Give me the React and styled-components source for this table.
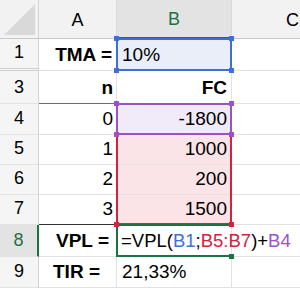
import React from "react";
import styled, { createGlobalStyle } from "styled-components";

const GREEN = "#1e7145";
const BLUE = "#3f6fd6";
const PURPLE = "#9b52c9";
const RED = "#d8203f";

const GlobalStyle = createGlobalStyle`
  html, body {
    margin: 0;
    padding: 0;
    background: #fff;
  }
  body {
    font-family: "Liberation Sans", Arial, sans-serif;
  }
`;

const Sheet = styled.div`
  width: 300px;
  height: 288px;
  overflow: hidden;
  display: grid;
  grid-template-columns: 39px 78px 115px 122px;
  grid-template-rows: 39px 32px 33px 31px 30px 30px 30px 32px 31px;
  color: #000;
`;

const Corner = styled.div`
  background: #f2f2f2;
  border-right: 1px solid #d4d4d4;
  border-bottom: 1px solid #c9c9c9;
  box-sizing: border-box;
  svg {
    display: block;
  }
`;

const ColHeader = styled.div`
  display: flex;
  align-items: center;
  justify-content: center;
  box-sizing: border-box;
  padding-top: 2px;
  font-size: 18px;
  background: ${(p) => (p.$active ? "#e3e3e3" : "#f2f2f2")};
  color: ${(p) => (p.$active ? GREEN : "#000")};
  border-right: 1px solid #dadada;
  border-bottom: ${(p) => (p.$active ? `2px solid ${GREEN}` : "1px solid #c9c9c9")};
`;

const RowHeader = styled.div`
  display: flex;
  align-items: flex-end;
  justify-content: center;
  box-sizing: border-box;
  padding-bottom: 5px;
  font-size: 18px;
  background: ${(p) => (p.$active ? "#e3e3e3" : "#f5f5f5")};
  color: ${(p) => (p.$active ? GREEN : "#000")};
  border-right: ${(p) => (p.$active ? `2px solid ${GREEN}` : "1px solid #d4d4d4")};
  border-bottom: ${(p) => (p.$gap ? "3px double #d0d0d0" : "1px solid #e3e3e3")};
`;

const Cell = styled.div`
  position: relative;
  display: flex;
  align-items: flex-end;
  justify-content: ${(p) => (p.$left ? "flex-start" : "flex-end")};
  box-sizing: border-box;
  min-width: 0;
  padding: 0 ${(p) => p.$pr ?? 4}px 4px ${(p) => (p.$left ? 5 : 4)}px;
  font-size: 19px;
  font-weight: ${(p) => (p.$bold ? 700 : 400)};
  white-space: nowrap;
  background: ${(p) => p.$fill || "transparent"};
  border-right: 1px solid #e2e2e2;
  border-bottom: 1px solid ${(p) => p.$rule || "#e2e2e2"};
`;

const Value = styled.span`
  position: relative;
  z-index: 1;
`;

const Formula = styled(Value)`
  font-size: 18.5px;
  margin-left: -1px;
`;

const Ref = styled.span`
  color: ${(p) => p.$c};
`;

const Frame = styled.div`
  position: absolute;
  top: -1px;
  left: -1px;
  right: -1px;
  bottom: -1px;
  z-index: 2;
  pointer-events: none;
  border: 0 solid ${(p) => p.$c};
  border-top-width: ${(p) => (p.$sides.includes("t") ? p.$w : 0)}px;
  border-right-width: ${(p) => (p.$sides.includes("r") ? p.$w : 0)}px;
  border-bottom-width: ${(p) => (p.$sides.includes("b") ? p.$w : 0)}px;
  border-left-width: ${(p) => (p.$sides.includes("l") ? p.$w : 0)}px;
`;

const Handle = styled.div`
  position: absolute;
  width: 5px;
  height: 5px;
  z-index: 3;
  background: ${(p) => p.$c};
  ${(p) => (p.$at[0] === "t" ? "top: -3px;" : "bottom: -3px;")}
  ${(p) => (p.$at[1] === "l" ? "left: -3px;" : "right: -3px;")}
`;

function Range({ c, sides = "trbl", w = 2, handles = [] }) {
  return (
    <>
      <Frame $c={c} $sides={sides} $w={w} />
      {handles.map((h) => (
        <Handle key={h} $c={c} $at={h} />
      ))}
    </>
  );
}

const ALL = ["tl", "tr", "bl", "br"];
const RULE = "#6e6e6e";

export default function App() {
  return (
    <>
      <GlobalStyle />
      <Sheet>
        <Corner>
          <svg width="38" height="38" viewBox="0 0 38 38">
            <polygon points="4,35 35,4 35,35" fill="#d9d9d9" />
          </svg>
        </Corner>
        <ColHeader>A</ColHeader>
        <ColHeader $active>B</ColHeader>
        <ColHeader>C</ColHeader>

        <RowHeader $gap>1</RowHeader>
        <Cell $bold><Value>TMA =</Value></Cell>
        <Cell $left $fill="#e9eef9">
          <Value>10%</Value>
          <Range c={BLUE} handles={ALL} />
        </Cell>
        <Cell />

        <RowHeader>3</RowHeader>
        <Cell $bold $pr={3} $rule={RULE}><Value>n</Value></Cell>
        <Cell $bold $rule={RULE}><Value>FC</Value></Cell>
        <Cell />

        <RowHeader>4</RowHeader>
        <Cell $pr={3}><Value>0</Value></Cell>
        <Cell $fill="#f1eaf8">
          <Value>-1800</Value>
          <Range c={PURPLE} handles={ALL} />
        </Cell>
        <Cell />

        <RowHeader>5</RowHeader>
        <Cell $pr={3}><Value>1</Value></Cell>
        <Cell $fill="#fbe4e7">
          <Value>1000</Value>
          <Range c={RED} sides="lr" />
        </Cell>
        <Cell />

        <RowHeader>6</RowHeader>
        <Cell $pr={3}><Value>2</Value></Cell>
        <Cell $fill="#fbe4e7">
          <Value>200</Value>
          <Range c={RED} sides="lr" />
        </Cell>
        <Cell />

        <RowHeader>7</RowHeader>
        <Cell $pr={3} $rule="#333"><Value>3</Value></Cell>
        <Cell $fill="#fbe4e7">
          <Value>1500</Value>
          <Range c={RED} sides="lrb" handles={["bl", "br"]} />
        </Cell>
        <Cell />

        <RowHeader $active>8</RowHeader>
        <Cell $bold $pr={7}><Value>VPL =</Value></Cell>
        <Cell $left>
          <Formula>
            =VPL(<Ref $c={BLUE}>B1</Ref>;<Ref $c={RED}>B5:B7</Ref>)+<Ref $c={PURPLE}>B4</Ref>
          </Formula>
          <Range c={GREEN} sides="tlb" handles={["br"]} />
        </Cell>
        <Cell />

        <RowHeader>9</RowHeader>
        <Cell $bold $pr={16}><Value>TIR =</Value></Cell>
        <Cell $left><Value>21,33%</Value></Cell>
        <Cell />
      </Sheet>
    </>
  );
}
